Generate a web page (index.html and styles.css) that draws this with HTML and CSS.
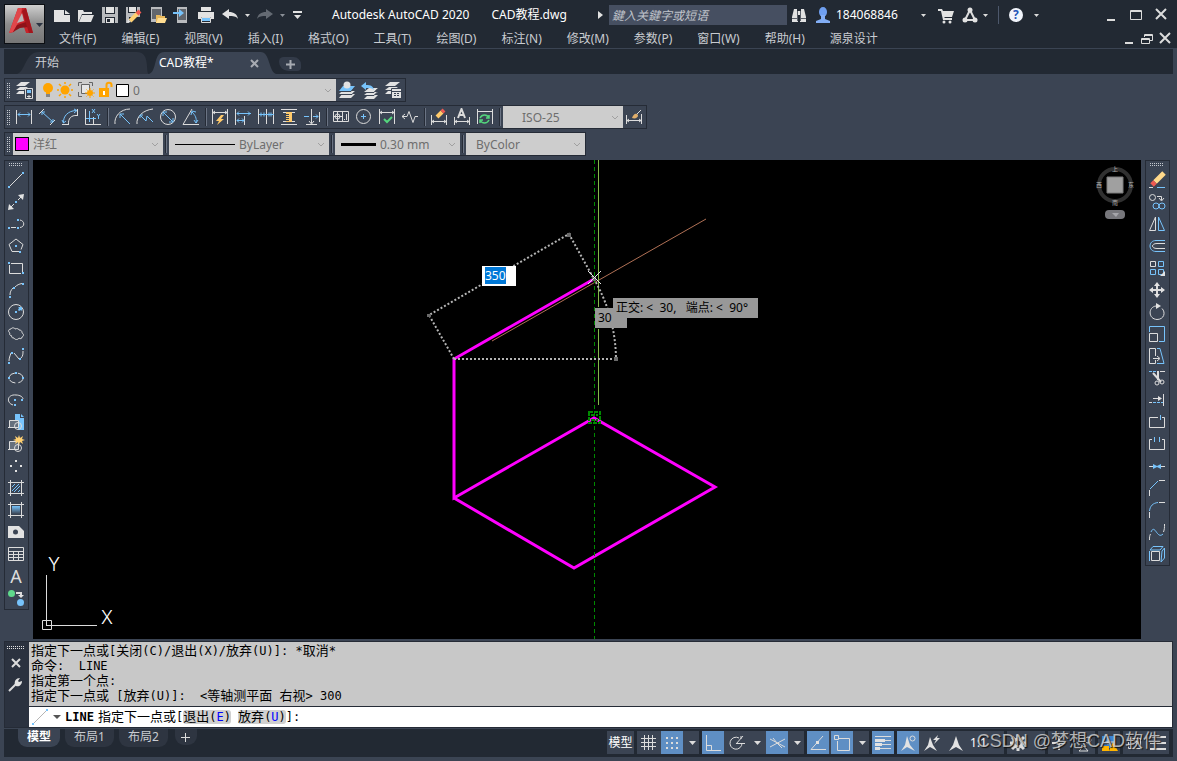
FILE: index.html
```
<!DOCTYPE html>
<html lang="zh-CN">
<head>
    <meta charset="UTF-8">
    <meta name="viewport" content="width=device-width, initial-scale=1.0">
    <title>Autodesk AutoCAD 2020</title>
    <link rel="stylesheet" href="styles.css">
</head>
<body>
<header class="header">
    <button type="button" class="app-button" aria-label="应用程序菜单">
        <svg width="39" height="38" viewBox="0 0 39 38">
            <path d="M4 28L13 3h8l7 25h-7l-2-6h-8l-2 5z" fill="#c8232a"/>
            <path d="M13 3h4l-2 12-7 12-4 1z" fill="#e0474b"/>
            <path d="M17 8l-5 10 7-2z" fill="#b9b9b9"/>
            <path d="M8 27l4-7 9-3 2 5-8 1z" fill="#8e1218"/>
            <path d="M21 3l7 25h-4L17 6z" fill="#a3151c"/>
            <path d="M31 18h7l-3.500 4z" fill="#2c3442"/>
        </svg>
    </button>
    <div class="header-rows">
        <div class="title-row">
            <div class="quick-access">
                <button type="button" aria-label="新建"><svg class="ico" viewBox="0 0 18 18"><path class="lf" d="M1 4h10v5h6v7H1zM12 4l5 4h-5z"/></svg></button>
                <button type="button" aria-label="打开"><svg class="ico" viewBox="0 0 18 18"><path class="lf" d="M1 16V4h5l1 2h8v2H5L2 15z"/><path class="lf" d="M5 9h12l-3 7H2z"/></svg></button>
                <button type="button" aria-label="保存"><svg class="ico" viewBox="0 0 18 18"><path class="gf" d="M1 1h16v16H1z"/><path fill="#222933" stroke="none" d="M4 1h10v7H4zM4 11h10v6H4z"/><path class="lf" d="M5 1h8v6H5zM5 12h8v5H5z"/><path fill="#222933" stroke="none" d="M6 13h3v3H6z"/></svg></button>
                <button type="button" aria-label="另存为"><svg class="ico" viewBox="0 0 18 18"><path class="gf" d="M1 1h14v16H1z"/><path fill="#222933" stroke="none" d="M3 1h9v6H3zM4 11h11v6H4z"/><path class="lf" d="M4 1h7v5H4z"/><path d="M5 15l8-8" stroke="#ffd071" stroke-width="4"/><path d="M12 8l3-3" stroke="#ee5a52" stroke-width="4"/><path class="lf" d="M3 13l3 3-4 1z"/></svg></button>
                <button type="button" aria-label="从移动设备打开"><svg class="ico" viewBox="0 0 18 18"><path class="gf" d="M2 1h11v15H2z"/><path fill="#62666d" stroke="none" d="M3 3h9v10H3z"/><path fill="#e9b85a" stroke="none" d="M7 9h4l1 1h4v7H7z"/><path fill="#ffdd91" stroke="none" d="M9 12h9l-2 5H7z"/></svg></button>
                <button type="button" aria-label="保存到移动设备"><svg class="ico" viewBox="0 0 18 18"><path class="gf" d="M4 1h10v16H4z"/><path fill="#62666d" stroke="none" d="M5 3h8v11H5z"/><path class="bf" d="M0 6h6V3l5 4-5 4V8H0z"/></svg></button>
                <button type="button" aria-label="打印"><svg class="ico" viewBox="0 0 18 18"><path class="lf" d="M4 1h10v4H4zM1 6h16v7h-3v-2H4v2H1z"/><path class="bf" d="M5 12h8v3H5z"/><path d="M4.500 11.500h9v5h-9z"/></svg></button>
                <button type="button" aria-label="放弃"><svg class="ico" viewBox="0 0 18 18"><path class="lf" d="M1 8l7-5v3c5 0 8 2 9 7-2-3-5-3-9-3v3z"/></svg></button>
                <button type="button" class="thin" aria-label="放弃列表"><svg class="caret" viewBox="0 0 5 3"><path d="M0 0h5L2.500 3z"/></svg></button>
                <button type="button" aria-label="重做"><svg class="ico" viewBox="0 0 18 18"><path fill="#646a73" stroke="none" d="M17 8l-7-5v3C5 6 2 8 1 13c2-3 5-3 9-3v3z"/></svg></button>
                <button type="button" class="thin dim" aria-label="重做列表"><svg class="caret" viewBox="0 0 5 3"><path d="M0 0h5L2.500 3z"/></svg></button>
                <button type="button" class="thin" aria-label="自定义"><svg width="9" height="8" viewBox="0 0 9 8"><path class="lf" d="M0 0h9v2H0zM1 4h7L4.500 8z"/></svg></button>
            </div>
            <h1 class="title"><span>Autodesk AutoCAD 2020</span><span>CAD教程.dwg</span></h1>
            <svg class="play" viewBox="0 0 5 8"><path class="lf" d="M0 0l5 4-5 4z"/></svg>
            <input type="search" class="search" aria-label="搜索" placeholder="鍵入关鍵字或短语">
            <div class="account">
                <button type="button" aria-label="查找"><svg class="ico" viewBox="0 0 18 18"><path class="lf" d="M4 3h3v2h4V3h3l2 8v5h-6V9H8v7H2v-5z"/><path stroke="#5b6069" d="M7.500 5v10M10.500 5v10M2 12.500h5M11 12.500h5"/></svg></button>
                <button type="button" class="user" aria-label="184068846"><svg class="ico" viewBox="0 0 18 18"><ellipse cx="9" cy="6" rx="4" ry="5" fill="#6f9ff0" stroke="none"/><path fill="#83aef5" stroke="none" d="M7 9h4v4l5 2v2H2v-2l5-2z"/></svg><span>184068846</span></button>
                <button type="button" class="thin user-caret" aria-label="帐户菜单"><svg class="caret" viewBox="0 0 5 3"><path d="M0 0h5L2.500 3z"/></svg></button>
                <button type="button" aria-label="商店"><svg class="ico" viewBox="0 0 18 18"><path class="lf" d="M1 3h4l1 2h11l-2 6H7l1 1h7v2H6L4 5H1z"/><circle class="lf" cx="7" cy="16" r="1.500"/><circle class="lf" cx="13" cy="16" r="1.500"/></svg></button>
                <button type="button" aria-label="保持连接"><svg class="ico" viewBox="0 0 18 18"><path stroke-width="2" d="M9 4L4 14h10z"/><circle class="lf" cx="9" cy="4" r="2.500"/><circle class="lf" cx="4" cy="14" r="2.500"/><circle class="lf" cx="14" cy="14" r="2.500"/></svg></button>
                <button type="button" class="thin" aria-label="连接列表"><svg class="caret" viewBox="0 0 5 3"><path d="M0 0h5L2.500 3z"/></svg></button>
                <i class="rule"></i>
                <button type="button" class="help" aria-label="帮助"><span>?</span></button>
                <button type="button" class="thin" aria-label="帮助列表"><svg class="caret" viewBox="0 0 5 3"><path d="M0 0h5L2.500 3z"/></svg></button>
            </div>
            <div class="win-buttons">
                <button type="button" aria-label="最小化"><svg viewBox="0 0 14 14"><path d="M3 12h8"/></svg></button>
                <button type="button" aria-label="最大化"><svg viewBox="0 0 14 14"><path d="M1.500 2.500h11v9h-11zM1 3.500h12" stroke-width="1"/></svg></button>
                <button type="button" aria-label="关闭"><svg viewBox="0 0 14 14"><path d="M2 1l10 10M12 1L2 11"/></svg></button>
            </div>
        </div>
        <div class="menu-row">
            <nav class="menu">
                <a href="#">文件(F)</a>
                <a href="#">编辑(E)</a>
                <a href="#">视图(V)</a>
                <a href="#">插入(I)</a>
                <a href="#">格式(O)</a>
                <a href="#">工具(T)</a>
                <a href="#">绘图(D)</a>
                <a href="#">标注(N)</a>
                <a href="#">修改(M)</a>
                <a href="#">参数(P)</a>
                <a href="#">窗口(W)</a>
                <a href="#">帮助(H)</a>
                <a href="#">源泉设计</a>
            </nav>
            <div class="win-buttons small">
                <button type="button" aria-label="最小化图形"><svg viewBox="0 0 14 14"><path d="M3 11h8"/></svg></button>
                <button type="button" aria-label="还原图形"><svg viewBox="0 0 14 14"><path d="M4.500 5V2.500h8v6H10M1.500 6.500h8v5h-8zM4 3.500h9M1 7.500h9" stroke-width="1"/></svg></button>
                <button type="button" aria-label="关闭图形"><svg viewBox="0 0 14 14"><path d="M2 1l10 10M12 1L2 11"/></svg></button>
            </div>
        </div>
    </div>
</header>

<nav class="file-tabs">
    <a href="#" class="file-tab">
        <svg class="tab-shape" viewBox="0 0 132 23" preserveAspectRatio="none"><path d="M0 23C9 20 8 0 22 0h98c14 0 8 23 12 23z"/></svg>
        <span>开始</span>
    </a>
    <div class="file-tab active">
        <svg class="tab-shape" viewBox="0 0 132 23" preserveAspectRatio="none"><path d="M0 23C9 20 4 0 16 0h100c10 0 8 20 16 23z"/></svg>
        <span>CAD教程*</span>
        <button type="button" class="tab-close" aria-label="关闭选项卡"><svg width="9" height="9" viewBox="0 0 9 9"><path d="M1 1l7 7M8 1L1 8"/></svg></button>
    </div>
    <button type="button" class="tab-add" aria-label="新图形"><svg width="9" height="9" viewBox="0 0 9 9"><path d="M4.500 0v9M0 4.500h9"/></svg></button>
</nav>

<section class="toolbars">
    <div class="toolbar">
        <i class="grip"></i>
        <button type="button" aria-label="图层特性"><svg class="ico" viewBox="0 0 18 18"><path class="lf" d="M6 1h9l-5 4H1zM5 6h8l-4 3H1zM4 10h5v3H1z"/><path fill="#3b4453" d="M10.500 7.500h7v10h-7z"/><path class="bf" d="M12 9h4v3h-4z"/><path d="M12 15.500h4M14 14v3"/></svg></button>
        <div class="combo layer">
            <span class="combo-mark">
                <svg width="90" height="18" viewBox="0 0 90 18">
                    <circle cx="6" cy="7" r="5" fill="#ffa400"/><path d="M4 11h4v2H4z" fill="#ffa400"/><path d="M4 13h4v3H4z" fill="#858585"/>
                    <g stroke="#ffa400" stroke-width="1.500"><circle cx="23" cy="9" r="4.500" fill="#ffa400" stroke="none"/><path d="M23 1v2M23 15v2M15 9h2M29 9h2M17 3l2 2M27 13l2 2M29 3l-2 2M19 13l-2 2"/></g>
                    <path d="M36.500 5V1.500H40M47 1.500h3.500V5M36.500 11v4.500H40M39.500 3.500h8v9h-8z" fill="none" stroke="#656565"/><path d="M40 4h7v8h-7z" fill="#e6e6e6"/><circle cx="48" cy="12" r="3" fill="#ffa400"/><path d="M48 7v2M48 15v2M43 12h2M51 12h2M44.500 8.500l1 1M51.500 8.500l-1 1M44.500 15.500l1-1M51.500 15.500l-1-1" stroke="#ffa400"/>
                    <path d="M57 7h10v9H57z" fill="#ffa400"/><path d="M64.500 8V4c0-3 5-3 5 0v2" fill="none" stroke="#ffa400" stroke-width="2"/><path d="M61 10h2v4h-2z" fill="#fff"/>
                    <path d="M74.500 3.500h12v12h-12z" fill="#fff" stroke="#000"/>
                </svg>
            </span>
            <select aria-label="图层"><option>0</option></select>
            <svg class="chev" viewBox="0 0 8 5"><path d="M1 1l3 3 3-3"/></svg>
        </div>
        <button type="button" aria-label="置为当前"><svg class="ico" viewBox="0 0 18 18"><path class="lf" d="M4 13h13l-4 4H1zM4 10h13l-3 3H1z"/><path class="bf" d="M5 5h12l-4 5H1z"/><path stroke="#3b4453" d="M1 10.500h12l4-4M1 13.500h13l3-3"/><circle class="lf" cx="9" cy="4" r="3.500"/></svg></button>
        <button type="button" aria-label="上一个图层"><svg class="ico" viewBox="0 0 18 18"><path class="lf" d="M7 14h10l-4 4H3zM7 11h10l-4 3H3zM8 7h9l-4 4H3z"/><path stroke="#3b4453" d="M3 14.500h10l4-4M3 11.500h10l4-4"/><path class="bf" d="M0 5l5-4v3c5 0 7 1 8 5-2-2-4-2-8-2v2z"/></svg></button>
        <button type="button" aria-label="图层状态"><svg class="ico" viewBox="0 0 18 18"><path class="lf" d="M6 1h10l-5 4H1zM5 6h9l-4 3H1zM4 10h4v3H1zM8 8h9v9H8z"/><path stroke="#3b4453" d="M7.500 17V7.500H17M8 10.500h9M10 12.500h2M13 12.500h2M10 14.500h2M13 14.500h2"/></svg></button>
    </div>

    <div class="toolbar">
        <i class="grip"></i>
        <button type="button" aria-label="线性"><svg class="ico" viewBox="0 0 18 18"><path d="M1.500 2v14M16.500 2v14"/><path class="b" d="M3 6.500h12M5 4.500l-2 2 2 2M13 4.500l2 2-2 2"/></svg></button>
        <button type="button" aria-label="对齐"><svg class="ico" viewBox="0 0 18 18"><path d="M1 6l5-5M12 17l5-5"/><path class="b" d="M4 4l11 10M4 7V4h3M12 14h3v-3"/></svg></button>
        <button type="button" aria-label="弧长"><svg class="ico" viewBox="0 0 18 18"><path class="b" d="M2.500 15C2 8 7 3 15 2.500M1 12l1.500 3L5 13M13 1l3 1.500L13 5"/><path d="M1 16.500h7M16.500 1v7M7.500 16C7 11 10 7 16 7.500"/></svg></button>
        <button type="button" aria-label="坐标"><svg class="ico" viewBox="0 0 18 18"><path d="M1.500 1v15.500H17M9.500 9v7"/><path class="b" d="M5.500 3v11M2 10.500h10M8 1l3 4M11 1L8 5M13 6l1.500 2L16 6M14.500 8v3"/></svg></button>
        <i class="sep"></i>
        <button type="button" aria-label="半径"><svg class="ico" viewBox="0 0 18 18"><path d="M2 16C1 9 7 1 17 1"/><path class="b" d="M17 16L7 6M7 10V6h4"/></svg></button>
        <button type="button" aria-label="折弯"><svg class="ico" viewBox="0 0 18 18"><path d="M1 16C0 9 7 2 17 1"/><path class="b" d="M17 14l-6-6-1 5-6-6M4 10V7h3"/></svg></button>
        <button type="button" aria-label="直径"><svg class="ico" viewBox="0 0 18 18"><circle cx="9" cy="9" r="7.500"/><path class="b" d="M4 4l10 10M4 8V4h4M10 14h4v-4"/></svg></button>
        <button type="button" aria-label="角度"><svg class="ico" viewBox="0 0 18 18"><path d="M10 1L1 16.500h16"/><path class="b" d="M10 4c3 3 5 6 4 11M9 7l1-4 4 1M12 12l2 3 2-3"/></svg></button>
        <i class="sep"></i>
        <button type="button" aria-label="快速标注"><svg class="ico" viewBox="0 0 18 18"><path d="M1.500 1v15M16.500 1v15M2 4.500h14M4 3L2 4.500 4 6M14 3l2 1.500L14 6"/><path fill="#ffca6b" stroke="none" d="M10 7l-5 6h3l-2 4 7-6h-3l3-4z"/></svg></button>
        <button type="button" aria-label="基线"><svg class="ico" viewBox="0 0 18 18"><path d="M1.500 1v16M10.500 8v9"/><path class="b" d="M3 5.500h14M5 3.500l-2 2 2 2M14 3.500l2 2-2 2M3 12.500h7M5 10.500l-2 2 2 2M8 10.500l2 2-2 2"/></svg></button>
        <button type="button" aria-label="连续"><svg class="ico" viewBox="0 0 18 18"><path d="M1.500 1v15M9.500 1v15M16.500 1v15"/><path class="b" d="M2 6.500h15M4 4.500v4M7 4.500v4M12 4.500v4M14 4.500v4"/></svg></button>
        <button type="button" aria-label="等距标注"><svg class="ico" viewBox="0 0 18 18"><path d="M1 1.500h16M1 16.500h16M3 4.500h3M12 4.500h3M3 13.500h3M12 13.500h3"/><path fill="#ffca6b" stroke="none" d="M6 4h6v10H6z"/><path stroke="#3b4453" d="M6 6.500h3M6 8.500h3M6 10.500h3M6 12.500h3"/></svg></button>
        <button type="button" aria-label="折断标注"><svg class="ico" viewBox="0 0 18 18"><path class="b" d="M1 8.500h5M10 8.500h5M13 6.500l2 2-2 2"/><path d="M16.500 4v10M8.500 1v14M6 13l2.500 3 2.500-3M3 16.500h11"/></svg></button>
        <i class="sep"></i>
        <button type="button" aria-label="公差"><svg class="ico" viewBox="0 0 18 18"><path d="M1.500 3.500h15v10h-15zM10.500 3v11M5.500 4v9M2 8.500h8"/><circle cx="5.500" cy="8.500" r="2.500"/><path d="M14.500 6v6M12 11.500h1"/></svg></button>
        <button type="button" aria-label="圆心标记"><svg class="ico" viewBox="0 0 18 18"><circle cx="8.500" cy="8.500" r="7"/><path class="b" d="M8.500 6v5M6 8.500h5"/></svg></button>
        <button type="button" aria-label="检验"><svg class="ico" viewBox="0 0 18 18"><path d="M1.500 1v15M16.500 1v15M2 4.500h14M4 3L2 4.500 4 6M14 3l2 1.500L14 6"/><path stroke="#54d67d" stroke-width="2" d="M6 11l3 3 5-5"/></svg></button>
        <button type="button" aria-label="折弯线性"><svg class="ico" viewBox="0 0 18 18"><path d="M1 8.500h5l2-5 4 11 2-6h3M4 6L1 8.500 4 11"/></svg></button>
        <i class="sep"></i>
        <button type="button" aria-label="编辑标注"><svg class="ico" viewBox="0 0 18 18"><path d="M1.500 7v10M16.500 7v10M2 13.500h14M4 12l-2 1.500L4 15M14 12l2 1.500-2 1.500"/><path stroke="#ffca6b" stroke-width="4" d="M7 9l5-5"/><path stroke="#ee5a52" stroke-width="4" d="M12 4l2-2"/></svg></button>
        <button type="button" aria-label="编辑标注文字"><svg class="ico" viewBox="0 0 18 18"><path d="M1.500 9v8M16.500 9v8M2 13.500h14M4 12l-2 1.500L4 15M14 12l2 1.500-2 1.500"/><path stroke-width="2" d="M5 10l3.500-9L12 10M7 7h4"/></svg></button>
        <button type="button" aria-label="标注更新"><svg class="ico" viewBox="0 0 18 18"><path d="M1.500 1v15M16.500 1v15M2 3.500h14"/><path stroke="#54d67d" stroke-width="1.500" d="M4 10c2-4 7-4 9 0M13 7v3h-3M13 12c-2 4-7 4-9 0M4 15v-3h3"/></svg></button>
        <i class="sep"></i>
        <div class="combo dimstyle">
            <select aria-label="标注样式"><option>ISO-25</option></select>
            <svg class="chev" viewBox="0 0 8 5"><path d="M1 1l3 3 3-3"/></svg>
        </div>
        <button type="button" aria-label="标注样式管理"><svg class="ico" viewBox="0 0 18 18"><path d="M1.500 7v9M16.500 6v10M2 12.500h14M4 11l-2 1.500L4 14M14 11l2 1.500-2 1.500M16 2l-5 5" stroke-width="1"/><path fill="#e0ae6b" stroke="none" d="M7 10c1-3 3-5 5-4l1 1c0 3-3 4-6 3z"/></svg></button>
    </div>

    <div class="toolbar">
        <i class="grip"></i>
        <div class="combo color">
            <span class="combo-mark"><i class="swatch"></i></span>
            <select aria-label="颜色"><option>洋红</option></select>
            <svg class="chev" viewBox="0 0 8 5"><path d="M1 1l3 3 3-3"/></svg>
        </div>
        <i class="sep"></i>
        <div class="combo linetype">
            <span class="combo-mark"><i class="line"></i></span>
            <select aria-label="线型"><option>ByLayer</option></select>
            <svg class="chev" viewBox="0 0 8 5"><path d="M1 1l3 3 3-3"/></svg>
        </div>
        <i class="sep"></i>
        <div class="combo weight">
            <span class="combo-mark"><i class="line thick"></i></span>
            <select aria-label="线宽"><option>0.30 mm</option></select>
            <svg class="chev" viewBox="0 0 8 5"><path d="M1 1l3 3 3-3"/></svg>
        </div>
        <i class="sep"></i>
        <div class="combo plot">
            <select aria-label="打印样式"><option>ByColor</option></select>
            <svg class="chev" viewBox="0 0 8 5"><path d="M1 1l3 3 3-3"/></svg>
        </div>
    </div>
</section>

<main class="workspace">
    <!-- draw tools -->
    <div class="palette">
        <i class="grip wide"></i>
        <button type="button" aria-label="直线"><svg class="ico" viewBox="0 0 18 18"><path d="M3 15L15 3"/><path class="bf" d="M1 15h2v2H1zM15 1h2v2h-2z"/></svg></button>
        <button type="button" aria-label="构造线"><svg class="ico" viewBox="0 0 18 18"><path d="M3 15L15 3"/><path class="lf" d="M1 17l1-6 5 5zM17 1l-1 6-5-5z"/><path fill="#3b4453" stroke="none" d="M7 7h4v4H7z"/><path class="bf" d="M8 8h2v2H8z"/></svg></button>
        <button type="button" aria-label="多段线"><svg class="ico" viewBox="0 0 18 18"><path d="M4 12.500h5M13 5c5 1 5 7 0 7.500"/><path class="bf" d="M1 12h2v2H1zM10 12h2v2h-2zM10 4h2v2h-2z"/></svg></button>
        <button type="button" aria-label="多边形"><svg class="ico" viewBox="0 0 18 18"><path d="M12 14.500H5l-3-7 7-5.500 7 5.500-2 5"/><path class="bf" d="M8 8h2v2H8zM12 14h2v2h-2z"/></svg></button>
        <button type="button" aria-label="矩形"><svg class="ico" viewBox="0 0 18 18"><path d="M4 4.500h11.500V13M14 14.500H2.500V6"/><path class="bf" d="M1 3h2v2H1zM15 13h2v2h-2z"/></svg></button>
        <button type="button" aria-label="圆弧"><svg class="ico" viewBox="0 0 18 18"><path d="M3 14c0-3 1-5 3-7M8 6c2-2 4-3 7-3.500"/><path class="bf" d="M2 15h2v2H2zM6 6h2v2H6zM15 2h2v2h-2z"/></svg></button>
        <button type="button" aria-label="圆"><svg class="ico" viewBox="0 0 18 18"><circle cx="9" cy="9" r="7.500"/><path class="bf" d="M8 8h2v2H8zM11 4h4v4l-1-1-2 1-1-1 1-2z"/></svg></button>
        <button type="button" aria-label="修订云线"><svg class="ico" viewBox="0 0 18 18"><path d="M4 4c1-2 4-1 4 0 2-1 4 0 4 1 3 0 3 2 3 3 2 1 2 3 0 4 0 2-2 2-3 1-1 2-4 2-5 0-2 0-3-1-2-2-2 0-3-2-2-3-2-1-2-4 1-4z"/></svg></button>
        <button type="button" aria-label="样条曲线"><svg class="ico" viewBox="0 0 18 18"><path d="M2 14c0-3 1-5 2-8M7 6l5 6M14 11c2-2 2-4 2-7"/><path class="bf" d="M1 15h2v2H1zM4 5h2v2H4zM12 11h2v2h-2zM15 1h2v2h-2z"/></svg></button>
        <button type="button" aria-label="椭圆"><svg class="ico" viewBox="0 0 18 18"><ellipse cx="9" cy="9" rx="7" ry="5" stroke-dasharray="7 3"/><path class="bf" d="M1 8h2v2H1zM15 8h2v2h-2zM8 3h2v2H8z"/></svg></button>
        <button type="button" aria-label="椭圆弧"><svg class="ico" viewBox="0 0 18 18"><path d="M6 14C-1 12 0 3 9 4c4 0 7 2 7 4"/><path class="bf" d="M7 8h2v2H7zM14 8h2v2h-2zM7 13h2v2H7z"/></svg></button>
        <button type="button" aria-label="插入块"><svg class="ico" viewBox="0 0 18 18"><path class="bf" d="M8 1h5v4h4v12h-6V9H8z"/><path class="bf" d="M14 1l3 3h-3z"/><path fill="#66707d" d="M2.500 7.500h9v7h-9z"/><circle cx="11" cy="13" r="3.500"/><path d="M1 14.500h3"/></svg></button>
        <button type="button" aria-label="创建块"><svg class="ico" viewBox="0 0 18 18"><path fill="#66707d" d="M2.500 6.500h9v8h-9z"/><circle cx="11" cy="13" r="3.500"/><path d="M1 14.500h3"/><path fill="#ffd071" stroke="none" d="M12 0l1 3 3-2-1 3 3 1-3 1 1 3-3-2-1 3-1-3-3 2 1-3-3-1 3-1-1-3 3 2z"/></svg></button>
        <button type="button" aria-label="点"><svg class="ico" viewBox="0 0 18 18"><path class="lf" d="M8 3h2v2H8zM3 8h2v2H3zM13 8h2v2h-2zM8 13h2v2H8z"/></svg></button>
        <button type="button" aria-label="图案填充"><svg class="ico" viewBox="0 0 18 18"><path d="M3.500 1v16M14.500 1v16M1 3.500h16M1 14.500h16"/><path class="b" d="M5 8l3-3M5 12l7-7M7 13l6-6M11 13l2-2"/></svg></button>
        <button type="button" aria-label="渐变色"><svg class="ico" viewBox="0 0 18 18"><defs><linearGradient id="grad" x1="0" y1="0" x2="0" y2="1"><stop offset="0" stop-color="#77c3fb"/><stop offset="1" stop-color="#3b4453"/></linearGradient></defs><path fill="url(#grad)" stroke="none" d="M5 5h8v8H5z"/><path d="M3.500 1v16M14.500 1v16M1 3.500h16M1 14.500h16"/></svg></button>
        <button type="button" aria-label="面域"><svg class="ico" viewBox="0 0 18 18"><path class="lf" d="M1 3h11l5 5v7H1z"/><circle cx="8.500" cy="9" r="2.500" fill="#3b4453" stroke="none"/></svg></button>
        <button type="button" aria-label="表格"><svg class="ico" viewBox="0 0 18 18"><path d="M1.500 2.500h15v13h-15zM1 6.500h16M1 9.500h16M1 12.500h16M6.500 6v10M11.500 6v10"/></svg></button>
        <button type="button" class="letter" aria-label="多行文字">A</button>
        <button type="button" aria-label="添加选定对象"><svg class="ico" viewBox="0 0 18 18"><circle cx="4.500" cy="4.500" r="3.500" fill="#5fd98b" stroke="none"/><circle class="bf" cx="13.500" cy="13.500" r="3.500"/><path stroke-width="2" d="M9 4h5v3"/><path class="lf" d="M11 6h6l-3 3z"/></svg></button>
    </div>

    <div class="canvas">
        <svg class="drawing" width="100%" height="100%">
            <line x1="459" y1="181" x2="673" y2="59" class="tracker"/>
            <path class="ortho" d="M565.500 0v147M565.500 169v76"/>
            <g class="outline">
                <path d="M561 119L421 199v139l140-80 121 69-141 81-120-70"/>
            </g>
            <line x1="561.500" y1="0" x2="561.500" y2="100%" class="polar"/>
            <g class="dims">
                <path d="M421 199l-25-44 140-81 25 45"/>
                <path d="M421 199h162A162 162 0 0 0 561 119"/>
            </g>
            <path class="dim-grip" d="M394 154h4v3h-4zM534 73h4v4h-4zM581 197h4v4h-4zM559 117h4v4h-4z"/>
            <path class="cursor" d="M555 111l13 13M568 111l-13 13"/>
            <path class="snap" d="M556 252h11v11h-11zM558 255h7M558 260h7"/>
        </svg>
        <input type="text" class="distance" aria-label="距离" value="350">
        <output class="angle">30</output>
        <div class="tooltip" role="tooltip">正交: &lt; &nbsp;30, &nbsp; 端点: &lt; &nbsp;90°</div>
        <svg class="ucs" width="84" height="96" viewBox="0 0 84 96">
            <path d="M4.500 77.500h9v9h-9zM8.500 82.500V32M8 82.500h51"/>
            <text x="10" y="28">Y</text>
            <text x="63" y="81">X</text>
        </svg>
        <svg class="viewcube" width="38" height="56" viewBox="0 0 38 56">
            <circle cx="19" cy="20" r="16" fill="none" stroke="#303030" stroke-width="4"/>
            <path d="M11 12h16v16H11z" fill="#a0a0a0" stroke="#7d7d7d"/>
            <text x="19" y="6">上</text><text x="3" y="22">西</text><text x="35" y="22">东</text><text x="19" y="40">南</text>
            <rect x="9" y="45" width="20" height="9" rx="4" fill="#77777c"/>
            <path d="M16 48h7l-3 4z" fill="#a5a5aa"/>
        </svg>
    </div>

    <!-- modify tools -->
    <div class="palette">
        <i class="grip wide"></i>
        <button type="button" aria-label="删除"><svg class="ico" viewBox="0 0 18 18"><path stroke="#ffd98a" stroke-width="5" d="M7 11l9-9"/><path stroke="#ee5a52" stroke-width="5" d="M4 14l3-3"/><path d="M1 16.500h4"/><path class="b" d="M9 16.500h8"/></svg></button>
        <button type="button" aria-label="复制"><svg class="ico" viewBox="0 0 18 18"><circle cx="4.500" cy="4.500" r="3"/><circle class="b" cx="8" cy="13" r="3"/><circle class="b" cx="14" cy="13" r="3"/><path d="M9 3.500h4.500V7M11 5l2.500 3L16 5"/></svg></button>
        <button type="button" aria-label="镜像"><svg class="ico" viewBox="0 0 18 18"><path d="M7.500 2v13.500h-6z"/><path class="b" d="M10.500 2v13.500h6z"/></svg></button>
        <button type="button" aria-label="偏移"><svg class="ico" viewBox="0 0 18 18"><path class="b" d="M17 3.500H8c-8 0-8 11 0 11h9"/><path d="M17 6.500H9c-6 0-6 5 0 5h8"/></svg></button>
        <button type="button" aria-label="阵列"><svg class="ico" viewBox="0 0 18 18"><path d="M2.500 2.500h5v5h-5z"/><path class="b" d="M10.500 2.500h5v5h-5zM2.500 10.500h5v5h-5zM10.500 10.500h5v5h-5z"/><path class="lf" d="M17 12v5h-5z"/></svg></button>
        <button type="button" aria-label="移动"><svg class="ico" viewBox="0 0 18 18"><path stroke-width="2" d="M9 3v12M3 9h12"/><path class="lf" d="M9 1l3 4H6zM9 17l3-4H6zM1 9l4-3v6zM17 9l-4-3v6z"/></svg></button>
        <button type="button" aria-label="旋转"><svg class="ico" viewBox="0 0 18 18"><path d="M8 3C0 4 0 16 9 16.500c7 0 9-7 5-11"/><path class="lf" d="M8 0l5 3-5 3z"/></svg></button>
        <button type="button" aria-label="缩放"><svg class="ico" viewBox="0 0 18 18"><path class="b" d="M1.500 7V1.500h15v15H11"/><path d="M1.500 8.500h8v8h-8z"/></svg></button>
        <button type="button" aria-label="拉伸"><svg class="ico" viewBox="0 0 18 18"><path d="M7.500 9V1.500h-6v15h6V13M5 11.500h6M9 9l3 2.500L9 14"/><path class="b" d="M9 1.500h3l4 15H9"/></svg></button>
        <button type="button" aria-label="修剪"><svg class="ico" viewBox="0 0 18 18"><path class="b" stroke-dasharray="3 1" d="M1 2.500h9"/><path d="M12 2.500h5"/><path stroke-width="2" d="M10 2v9M5 4l8 9"/><circle cx="9" cy="14" r="2"/><circle cx="14" cy="13" r="2"/></svg></button>
        <button type="button" aria-label="延伸"><svg class="ico" viewBox="0 0 18 18"><path d="M5 7.500h8M15.500 3v12M1 11.500h3"/><path class="lf" d="M10 5l4 2.500-4 2.500z"/><path class="b" stroke-dasharray="3 1" d="M5 11.500h10"/></svg></button>
        <button type="button" aria-label="打断于点"><svg class="ico" viewBox="0 0 18 18"><path d="M10 4.500H1.500v10h15v-10H14"/><path class="b" d="M12.500 2v5"/></svg></button>
        <button type="button" aria-label="打断"><svg class="ico" viewBox="0 0 18 18"><path d="M4 4.500H1.500v10h15v-10H14"/><path class="b" d="M6.500 2v5M11.500 2v5"/></svg></button>
        <button type="button" aria-label="合并"><svg class="ico" viewBox="0 0 18 18"><path d="M1 9.500h16"/><path class="bf" d="M5 7l4 2 4-2v5l-4-2-4 2z"/></svg></button>
        <button type="button" aria-label="倒角"><svg class="ico" viewBox="0 0 18 18"><path d="M11 1.500h6M1.500 11v6"/><path class="b" d="M2 10l8-8"/></svg></button>
        <button type="button" aria-label="圆角"><svg class="ico" viewBox="0 0 18 18"><path d="M11 1.500h6M1.500 11v6"/><path class="b" d="M1.500 10C2 5 5 2 10 1.500"/></svg></button>
        <button type="button" aria-label="光顺曲线"><svg class="ico" viewBox="0 0 18 18"><path d="M1.500 17c0-3 0-4 1-6M16.500 1c0 4 0 5-1 8"/><path class="b" d="M3 9c4-9 6 8 12 2"/></svg></button>
        <button type="button" aria-label="分解"><svg class="ico" viewBox="0 0 18 18"><path d="M3.500 6.500h8v9h-8z"/><path class="b" d="M2 5l3-3.500h10L12 5zM1.500 6v10M14 6l2.500-3v10L13 17z"/></svg></button>
    </div>
</main>

<section class="command">
    <div class="command-side">
        <i class="grip wide"></i>
        <button type="button" aria-label="关闭命令行"><svg width="10" height="10" viewBox="0 0 10 10"><path stroke-width="2" d="M1 1l8 8M9 1L1 9"/></svg></button>
        <button type="button" aria-label="自定义命令行"><svg width="15" height="15" viewBox="0 0 15 15"><path stroke-width="2" d="M1 14l7-7"/><path class="lf" d="M7 8c-1-4 1-7 5-7l-2 3 1 1 3-1c0 4-3 6-6 5z"/></svg></button>
    </div>
    <div class="command-main">
        <div class="history">
            <p><b>指定下一点或</b>[<b>关闭</b>(C)/<b>退出</b>(X)/<b>放弃</b>(U)]: *<b>取消</b>*</p>
            <p><b>命令</b>: &nbsp;LINE</p>
            <p><b>指定第一个点</b>:</p>
            <p><b>指定下一点或</b> [<b>放弃</b>(U)]: &nbsp;&lt;<b>等轴测平面</b> <b>右视</b>&gt; 300</p>
        </div>
        <div class="prompt">
            <svg width="18" height="18" viewBox="0 0 18 18"><path stroke="#b5b5b5" d="M3 15L15 3"/><path class="bf" d="M1 15h2v2H1zM15 1h2v2h-2z"/></svg>
            <svg width="8" height="4" viewBox="0 0 8 4"><path fill="#555" stroke="none" d="M0 0h8L4 4z"/></svg>
            <strong>LINE</strong>
            <p><b>指定下一点或</b>[<a href="#"><b>退出</b>(<em>E</em>)</a> <a href="#"><b>放弃</b>(<em>U</em>)</a>]:</p>
        </div>
    </div>
</section>

<footer class="status">
    <nav class="layouts">
        <a href="#" class="active">模型</a>
        <a href="#">布局1</a>
        <a href="#">布局2</a>
        <button type="button" aria-label="新建布局"><svg width="9" height="9" viewBox="0 0 9 9"><path d="M4.500 0v9M0 4.500h9"/></svg></button>
    </nav>
    <div class="modes">
        <div class="mode-group"><button type="button" class="text">模型</button></div>
        <div class="mode-group">
            <button type="button" aria-label="栅格"><svg class="ico" viewBox="0 0 18 18"><path stroke-width="1" d="M5.500 1v15M9.500 1v15M13.500 1v15M2 4.500h15M2 8.500h15M2 12.500h15"/></svg></button>
            <button type="button" class="on" aria-label="捕捉"><svg class="ico" viewBox="0 0 18 18"><path stroke-width="2" stroke-dasharray="2 3" d="M3 4h12M3 9h12M3 14h12"/></svg></button>
            <button type="button" class="drop" aria-label="捕捉设置"><svg class="caret big" viewBox="0 0 7 4"><path d="M0 0h7L3.500 4z"/></svg></button>
        </div>
        <div class="mode-group">
            <button type="button" class="on" aria-label="正交"><svg class="ico" viewBox="0 0 18 18"><path d="M2.500 1v15.500H17M2 11.500h5.500V16"/></svg></button>
            <button type="button" aria-label="极轴"><svg class="ico" viewBox="0 0 18 18"><path d="M14 9a6 6 0 1 1-3-5M8 10l7-8M8 9.500h9M13 2v3"/></svg></button>
            <button type="button" class="drop" aria-label="极轴设置"><svg class="caret big" viewBox="0 0 7 4"><path d="M0 0h7L3.500 4z"/></svg></button>
            <button type="button" class="on" aria-label="等轴测草图"><svg class="ico" viewBox="0 0 18 18"><path d="M2 5l15 8M2 13l15-8M5 4l4 5M9 9l5 5"/></svg></button>
            <button type="button" class="drop" aria-label="等轴测设置"><svg class="caret big" viewBox="0 0 7 4"><path d="M0 0h7L3.500 4z"/></svg></button>
        </div>
        <div class="mode-group">
            <button type="button" class="on" aria-label="对象捕捉追踪"><svg class="ico" viewBox="0 0 18 18"><path d="M14 2L2 15.500h15"/><path class="lf" d="M7 7h3v3H7z"/></svg></button>
            <button type="button" class="on" aria-label="对象捕捉"><svg class="ico" viewBox="0 0 18 18"><path d="M6 4.500h10.500v12h-12V7M1.500 1.500h4v4h-4z"/></svg></button>
            <button type="button" class="drop" aria-label="捕捉列表"><svg class="caret big" viewBox="0 0 7 4"><path d="M0 0h7L3.500 4z"/></svg></button>
        </div>
        <div class="mode-group">
            <button type="button" class="on" aria-label="线宽"><svg class="ico" viewBox="0 0 18 18"><path d="M1 2.500h16M1 6.500h16M1 10.500h16M1 14.500h16"/><path class="lf" d="M1 5h10v3H1zM1 9h7v3H1zM1 13h5v3H1z"/></svg></button>
        </div>
        <div class="mode-group">
            <button type="button" class="on" aria-label="注释可见性"><svg class="ico" viewBox="0 0 18 18"><path class="lf" d="M8 2l3 9 5 6-8-4-6 4 4-6z"/><circle cx="13.500" cy="4.500" r="2.500"/></svg></button>
            <button type="button" aria-label="自动缩放"><svg class="ico" viewBox="0 0 18 18"><path class="lf" d="M7 3l3 8 4 6-7-4-6 4 4-6zM15 1l-5 5h3l-2 4 6-6h-3z"/></svg></button>
            <button type="button" aria-label="注释比例"><svg class="ico" viewBox="0 0 18 18"><path class="lf" d="M9 2l3 9 4 6-7-4-7 4 4-6z"/></svg></button>
            <button type="button" class="text scale">1:1</button>
            <button type="button" class="drop" aria-label="比例列表"></button>
        </div>
        <div class="mode-group">
            <button type="button" aria-label="切换工作空间"><svg class="ico" viewBox="0 0 18 18"><circle cx="9" cy="9" r="4" stroke-width="3"/><path stroke-width="3" d="M9 1v4M9 13v4M1 9h4M13 9h4M3 3l3 3M12 12l3 3M15 3l-3 3M6 12l-3 3"/></svg></button>
            <button type="button" class="drop" aria-label="工作空间列表"></button>
        </div>
        <div class="mode-group">
            <button type="button" aria-label="注释监视器"><svg class="ico" viewBox="0 0 18 18"><path stroke-width="2" d="M9 2v14M2 9h14"/></svg></button>
        </div>
        <div class="mode-group">
            <button type="button" aria-label="隔离对象"><svg class="ico" viewBox="0 0 18 18"><path d="M9 12l-5 5h9z"/><circle cx="13" cy="6" r="3"/></svg></button>
        </div>
        <div class="mode-group">
            <button type="button" aria-label="硬件加速"><svg class="ico" viewBox="0 0 18 18"><path fill="#3e82d0" stroke="none" d="M2 2h13v12H2z"/><path d="M8 2v9M4 8h11"/><path fill="#ffb400" stroke="none" d="M2 12h7v5H2zM13 8l5 9H9z"/></svg></button>
        </div>
        <div class="mode-group">
            <button type="button" aria-label="全屏显示"><svg class="ico" viewBox="0 0 18 18"><path d="M3.500 4.500h12v10h-12zM6 12l6-5M9 7h3v3"/></svg></button>
            <button type="button" aria-label="自定义状态栏"><svg class="ico" viewBox="0 0 18 18"><path stroke-width="2" d="M1 3h16M1 9h16M1 15h16"/></svg></button>
        </div>
        <span class="watermark">CSDN @梦想CAD软件</span>
    </div>
</footer>
</body>
</html>
```
FILE: styles.css
```
* {
    box-sizing: border-box;
}

body {
    font-family: "Noto Sans", "Noto Sans CJK SC", sans-serif;
    font-size: 12px;
    line-height: 16px;
    background-color: #3b4453;
    margin: 0;
    height: 100vh;
    display: flex;
    flex-direction: column;
    overflow: hidden;
    color: #c9ccd1;
}

button {
    display: flex;
    align-items: center;
    justify-content: center;
    flex-shrink: 0;
    padding: 0;
    border: none;
    background: none;
    color: inherit;
    font: inherit;
}

a {
    color: inherit;
    text-decoration: none;
}

p {
    margin: 0;
}

svg {
    display: block;
    flex-shrink: 0;
    fill: none;
    stroke: #dcdcdc;
}

/* Icons */
.ico {
    width: 18px;
    height: 18px;
}

.b {
    stroke: #77c3fb;
}

.lf {
    fill: #e2e2e2;
    stroke: none;
}

.gf {
    fill: #b9bbbe;
    stroke: none;
}

.bf {
    fill: #77c3fb;
    stroke: none;
}

.caret {
    width: 5px;
    height: 3px;
    fill: #dcdcdc;
    stroke: none;
}

.caret.big {
    width: 7px;
    height: 4px;
}

.dim .caret {
    fill: #8b9098;
}

/* Title bar and menu */
.header {
    display: flex;
    height: 49px;
    padding: 0 4px;
    background-color: #222933;
    border-bottom: 1px solid #3b4453;
}

.app-button {
    width: 41px;
    height: 40px;
    margin-top: 4px;
    border: 1px solid #0c0f13;
    background: linear-gradient(#cfcfcf, #8d8d8d 50%, #767676);
}

.app-button svg {
    stroke: none;
}

.header-rows {
    flex: 1;
    min-width: 0;
}

.title-row {
    display: flex;
    align-items: center;
    height: 30px;
    color: #fff;
}

.quick-access {
    display: flex;
    align-items: center;
    padding-left: 5px;
}

.quick-access button {
    width: 24px;
    height: 24px;
}

.quick-access .thin {
    width: 11px;
}

.quick-access .thin + .thin {
    width: 19px;
}

.title {
    display: flex;
    gap: 22px;
    margin: 0 0 0 25px;
    width: 266px;
    font-size: 12px;
    font-weight: normal;
    white-space: nowrap;
}

.play {
    width: 5px;
    height: 8px;
    margin-right: 6px;
}

.search {
    width: 178px;
    height: 20px;
    padding: 0 3px;
    border: none;
    border-radius: 0;
    background-color: #464f61;
    font: italic 12px "Noto Sans", "Noto Sans CJK SC", sans-serif;
}

.search::placeholder {
    color: #c0c4cb;
    opacity: 1;
}

.account {
    display: flex;
    align-items: center;
    flex: 1;
}

.account button {
    width: 24px;
    height: 24px;
}

.account .user {
    width: auto;
    gap: 4px;
    padding-left: 3px;
}

.account .thin {
    width: 7px;
}

.account .user-caret {
    width: 36px;
    padding-left: 16px;
}

.account .help {
    width: 34px;
}

.help span {
    width: 14px;
    height: 14px;
    border-radius: 50%;
    background-color: #f1f4fb;
    color: #2454b8;
    font-weight: bold;
    line-height: 14px;
}

.rule {
    width: 1px;
    height: 18px;
    margin-left: 9px;
    background-color: #4d586c;
}

.win-buttons {
    display: flex;
    gap: 11px;
    padding-right: 5px;
}

.win-buttons.small {
    gap: 4px;
    padding-right: 1px;
}

.win-buttons svg {
    width: 14px;
    height: 14px;
    stroke-width: 2;
}

.menu-row {
    display: flex;
    align-items: center;
    justify-content: space-between;
    height: 17px;
}

.menu {
    display: flex;
    gap: 25px;
    padding-left: 14px;
    white-space: nowrap;
}

/* File tabs */
.file-tabs {
    display: flex;
    align-items: flex-end;
    height: 25px;
    margin: 0 4px;
    padding-left: 13px;
    background-color: #222933;
}

.file-tab {
    position: relative;
    display: flex;
    align-items: center;
    width: 132px;
    height: 22px;
    padding-left: 18px;
}

.file-tab.active {
    color: #fff;
    padding-left: 10px;
    width: 127px;
}

.tab-shape {
    position: absolute;
    left: 0;
    top: 0;
    width: 100%;
    height: 100%;
    fill: #2e3541;
    stroke: none;
}

.active .tab-shape {
    fill: #3b4453;
}

.file-tab span {
    position: relative;
}

.tab-close {
    position: relative;
    margin-left: auto;
    margin-right: 17px;
}

.tab-close svg,
.tab-add svg {
    stroke: #a7abb2;
    stroke-width: 2;
}

.tab-add {
    width: 22px;
    height: 14px;
    margin-bottom: 3px;
    margin-left: 3px;
    border-radius: 5px 8px 4px 10px;
    background-color: #333b49;
}

/* Toolbars */
.toolbars {
    display: flex;
    flex-direction: column;
    align-items: flex-start;
    gap: 3px;
    padding: 4px 4px;
}

.toolbar {
    display: flex;
    align-items: center;
    height: 24px;
    border: 1px solid #252b36;
}

.toolbar button {
    width: 23px;
    height: 22px;
    padding-right: 2px;
}

/* dotted handle: column stripes cut by rows of the panel colour */
.grip {
    width: 3px;
    height: 15px;
    margin: 0 3px 0 2px;
    background-image: repeating-linear-gradient(transparent 0 1px, #3b4453 1px 2px),
        repeating-linear-gradient(90deg, #c4c8ce 0 1px, transparent 1px 2px);
}

.grip.wide {
    width: 13px;
    height: 3px;
    margin: 2px 4px 3px;
}

.sep {
    width: 2px;
    height: 18px;
    margin: 0 2px;
    border-left: 1px solid #252b36;
    background-color: #6b7484;
}

.combo {
    position: relative;
    height: 22px;
}

.combo select {
    width: 100%;
    height: 100%;
    padding: 0 20px 0 10px;
    border: none;
    border-radius: 0;
    appearance: none;
    background-color: #cdcdcd;
    color: #6e6e6e;
    font-family: inherit;
    font-size: 12px;
}

.combo-mark {
    position: absolute;
    left: 6px;
    top: 0;
    height: 22px;
    display: flex;
    align-items: center;
    pointer-events: none;
}

.combo-mark svg {
    stroke: none;
}

.chev {
    position: absolute;
    right: 4px;
    top: 9px;
    width: 8px;
    height: 5px;
    stroke: #a0a0a0;
    pointer-events: none;
}

.layer {
    width: 300px;
}

.layer select {
    padding-left: 97px;
}

.dimstyle {
    width: 120px;
}

.dimstyle select {
    padding-left: 19px;
}

.color {
    width: 150px;
}

.color .combo-mark {
    left: 2px;
}

.color select {
    padding-left: 20px;
}

.swatch {
    width: 14px;
    height: 14px;
    border: 1px solid #000;
    background-color: #ff00ff;
}

.linetype {
    width: 160px;
}

.linetype select {
    padding-left: 70px;
}

.line {
    width: 60px;
    height: 1px;
    background-color: #000;
}

.line.thick {
    width: 35px;
    height: 3px;
}

.weight {
    width: 125px;
}

.weight select {
    padding-left: 45px;
}

.plot {
    width: 119px;
}

/* Drawing area with the two tool columns */
.workspace {
    display: flex;
    align-items: flex-start;
    gap: 4px;
    flex: 1;
    min-height: 0;
    padding: 0 7px 0 4px;
}

.palette {
    width: 25px;
    flex-shrink: 0;
    border: 1px solid #252b36;
}

.palette .grip {
    display: block;
}

.palette button {
    width: 100%;
    height: 22px;
    padding-right: 1px;
}

.palette .letter {
    font-size: 18px;
    color: #dcdcdc;
}

.canvas {
    position: relative;
    flex: 1;
    align-self: stretch;
    overflow: hidden;
    background-color: #000;
}

.drawing {
    position: absolute;
    left: 0;
    top: 0;
}

.outline {
    stroke: #ff00ff;
    stroke-width: 3;
}

.tracker {
    stroke: #b07055;
}

.ortho {
    stroke: #84b84a;
}

.polar {
    stroke: #008a00;
    stroke-dasharray: 4 3;
}

.dims {
    stroke: #b4b4b4;
    stroke-width: 2;
    stroke-dasharray: 2 2;
}

.dim-grip {
    fill: #6a6a6a;
    stroke: none;
}

.cursor {
    stroke: #e8e8e8;
}

.snap {
    stroke: #008a00;
    stroke-width: 2;
    stroke-dasharray: 4 1;
}

.distance {
    position: absolute;
    left: 449px;
    top: 106px;
    width: 34px;
    height: 20px;
    padding: 0 3px 1px;
    border: none;
    font: 12px "Noto Sans", sans-serif;
    background: linear-gradient(#0078d7, #0078d7) 3px 1px / 21px 17px no-repeat #fff;
    color: #fff;
}

.angle,
.tooltip {
    position: absolute;
    height: 20px;
    padding: 0 3px;
    line-height: 20px;
    background-color: #989898;
    color: #000;
    white-space: nowrap;
}

.angle {
    left: 562px;
    top: 148px;
    width: 32px;
}

.tooltip {
    left: 580px;
    top: 138px;
    width: 145px;
}

.ucs {
    position: absolute;
    left: 5px;
    bottom: 0;
}

.ucs text {
    font-family: Inter, sans-serif;
    font-size: 18px;
    font-weight: 300;
    fill: #fff;
    stroke: none;
}

.viewcube {
    position: absolute;
    right: 7px;
    top: 5px;
    stroke: none;
}

.viewcube text {
    font-size: 6px;
    text-anchor: middle;
    fill: #b0b0b0;
}

/* Command line */
.command {
    display: flex;
    margin: 2px 4px 1px;
    border: 1px solid #252b36;
}

.command-side {
    display: flex;
    flex-direction: column;
    align-items: center;
    gap: 9px;
    width: 24px;
    padding: 2px 3px 0 0;
    background-color: #2b323f;
}

.command-side .grip {
    width: 17px;
    margin: 2px 0 0;
    background-image: repeating-linear-gradient(transparent 0 1px, #2b323f 1px 2px),
        repeating-linear-gradient(90deg, #e2e2e2 0 1px, transparent 1px 2px);
}

.command-main {
    flex: 1;
    font-family: "DejaVu Sans Mono", "Noto Sans CJK SC", monospace;
    font-size: 12px;
    color: #000;
}

.command-main b {
    font-size: 13px;
    font-weight: normal;
    line-height: 1;
}

.history {
    padding: 2px;
    background-color: #c8c8c8;
}

.history p {
    height: 15px;
    line-height: 15px;
}

.prompt {
    display: flex;
    align-items: center;
    gap: 4px;
    height: 21px;
    padding-left: 2px;
    border-top: 1px solid #252b36;
    background-color: #fff;
}

.prompt a {
    border-radius: 3px;
    background-color: #d0d0d0;
}

.prompt em {
    font-style: normal;
    color: #0000ff;
}

/* Status bar */
.status {
    display: flex;
    justify-content: space-between;
    height: 28px;
    margin: 0 4px 4px;
    background-color: #222933;
}

.layouts {
    display: flex;
    height: 18px;
    padding-left: 14px;
}

.layouts a {
    padding: 0 9px;
    margin-right: 5px;
    border-radius: 0 0 9px 9px;
    background-color: #2e3541;
}

.layouts .active {
    background-color: #3b4453;
    color: #fff;
    font-weight: bold;
}

.layouts button {
    width: 22px;
    height: 16px;
    margin-left: 2px;
    border-radius: 0 0 9px 9px;
    background-color: #2e3541;
}

.modes {
    position: relative;
    display: flex;
    gap: 3px;
    padding: 2px 4px 3px 0;
}

.mode-group {
    display: flex;
    gap: 2px;
    background-color: #3b4453;
}

.modes button {
    width: 22px;
    height: 23px;
}

.modes .on {
    background-color: #5f8fc4;
}

.modes .drop {
    width: 14px;
}

.modes .text {
    width: 27px;
    color: #fff;
}

.modes .scale {
    width: 19px;
}

.watermark {
    position: absolute;
    right: 12px;
    top: 0;
    font-family: "Liberation Sans", "Noto Sans CJK SC", sans-serif;
    font-size: 18px;
    line-height: 24px;
    white-space: nowrap;
    color: rgba(225, 225, 225, 0.75);
    text-shadow: 1px 1px 1px #111;
    pointer-events: none;
}
```
